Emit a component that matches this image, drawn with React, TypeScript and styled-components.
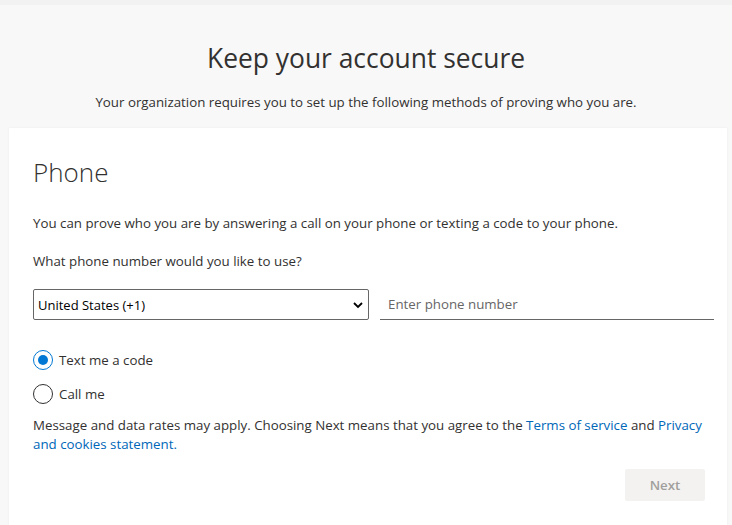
import styled, { createGlobalStyle } from "styled-components";

const GlobalStyle = createGlobalStyle`
  html, body {
    margin: 0;
    padding: 0;
    background: #f8f8f8;
    font-family: "Open Sans", "Noto Sans", sans-serif;
    color: #323130;
  }
`;

const Page = styled.div`
  min-height: 525px;
  display: flex;
  flex-direction: column;
`;

const TopStrip = styled.div`
  height: 5px;
  background: #f2f2f2;
`;

const Header = styled.header`
  display: flex;
  flex-direction: column;
  align-items: center;
  padding-top: 36px;
`;

const Title = styled.h1`
  margin: 0;
  font-size: 26.4px;
  font-weight: 400;
  line-height: 34px;
  color: #323130;
`;

const Subtitle = styled.p`
  margin: 18px 0 0;
  font-size: 13.3px;
  line-height: 18px;
  color: #323130;
`;

const Card = styled.section`
  flex: 1;
  margin: 17px 5px 0 9px;
  background: #fff;
  padding: 26px 13px 24px 24px;
  box-shadow: 0 0 2px rgba(0, 0, 0, 0.06);
`;

const Heading = styled.h2`
  margin: 0;
  font-size: 26px;
  font-weight: 300;
  line-height: 36px;
  color: #323130;
`;

const Text = styled.p<{ $gap?: number }>`
  margin: ${(p) => p.$gap ?? 0}px 0 0;
  padding-right: 10px;
  font-size: 13.3px;
  line-height: 19px;
  color: #323130;
`;

const Link = styled.a`
  color: #0067b8;
  text-decoration: none;
`;

const PhoneRow = styled.div`
  display: flex;
  gap: 11px;
  margin-top: 18px;
`;

const SelectBox = styled.div`
  position: relative;
  width: 336px;
  height: 31px;
  box-sizing: border-box;
  border: 1px solid #666;
  border-radius: 2px;
  display: flex;
  align-items: center;
  padding: 0 4px;
  font-size: 13px;
  color: #000;
`;

const Chevron = styled.svg`
  position: absolute;
  right: 5px;
  top: 11px;
`;

const PhoneInput = styled.div`
  flex: 1;
  height: 31px;
  box-sizing: border-box;
  border-bottom: 1px solid #666;
  display: flex;
  align-items: center;
  padding: 0 8px;
  font-size: 13.3px;
  color: #666;
`;

const Options = styled.div`
  display: flex;
  flex-direction: column;
  gap: 14px;
  margin-top: 30px;
`;

const Option = styled.label`
  display: flex;
  align-items: center;
  gap: 6px;
  font-size: 13.3px;
  color: #323130;
  height: 20px;
`;

const RadioCircle = styled.span<{ $on?: boolean }>`
  width: 20px;
  height: 20px;
  box-sizing: border-box;
  border-radius: 50%;
  border: 1px solid ${(p) => (p.$on ? "#0078d4" : "#323130")};
  display: flex;
  align-items: center;
  justify-content: center;
  &::after {
    content: "";
    width: 10px;
    height: 10px;
    border-radius: 50%;
    background: ${(p) => (p.$on ? "#0078d4" : "transparent")};
  }
`;

const Footer = styled.div`
  display: flex;
  justify-content: flex-end;
  margin-top: 15px;
  padding-right: 9px;
`;

const NextButton = styled.button`
  width: 80px;
  height: 32px;
  border: none;
  border-radius: 2px;
  background: #f3f2f1;
  color: #a19f9d;
  font-family: inherit;
  font-size: 13.3px;
  font-weight: 600;
`;

export default function App() {
  return (
    <Page>
      <GlobalStyle />
      <TopStrip />
      <Header>
        <Title>Keep your account secure</Title>
        <Subtitle>
          Your organization requires you to set up the following methods of
          proving who you are.
        </Subtitle>
      </Header>
      <Card>
        <Heading>Phone</Heading>
        <Text $gap={24}>
          You can prove who you are by answering a call on your phone or
          texting a code to your phone.
        </Text>
        <Text $gap={19}>What phone number would you like to use?</Text>
        <PhoneRow>
          <SelectBox>
            United States (+1)
            <Chevron width="10" height="8" viewBox="0 0 10 8">
              <path d="M1 2 L5 6 L9 2" fill="none" stroke="#000" strokeWidth="1.8" />
            </Chevron>
          </SelectBox>
          <PhoneInput>Enter phone number</PhoneInput>
        </PhoneRow>
        <Options>
          <Option>
            <RadioCircle $on />
            Text me a code
          </Option>
          <Option>
            <RadioCircle />
            Call me
          </Option>
        </Options>
        <Text $gap={12}>
          Message and data rates may apply. Choosing Next means that you agree
          to the <Link>Terms of service</Link> and{" "}
          <Link>Privacy and cookies statement.</Link>
        </Text>
        <Footer>
          <NextButton>Next</NextButton>
        </Footer>
      </Card>
    </Page>
  );
}
